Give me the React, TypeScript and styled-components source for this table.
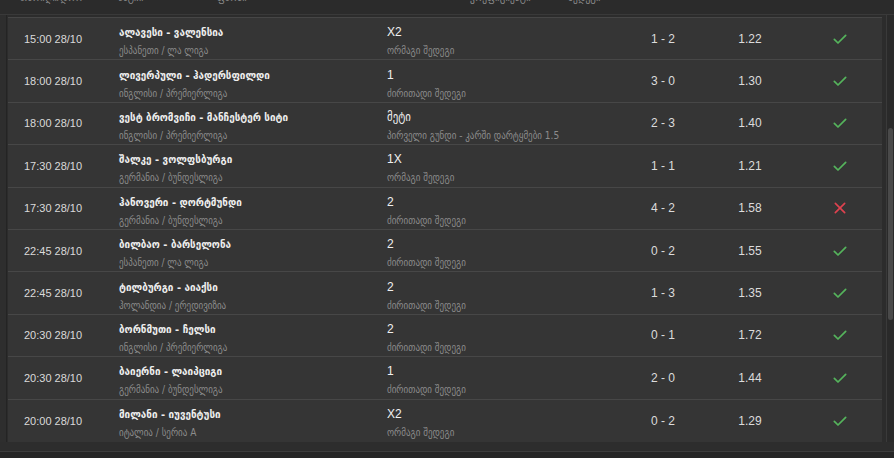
import React from "react";
import styled, { createGlobalStyle } from "styled-components";

const Global = createGlobalStyle`
  html, body { margin: 0; padding: 0; background: #2a2a2a; }
  body { font-family: "Liberation Sans", "DejaVu Sans Condensed", "DejaVu Sans", sans-serif; overflow: hidden; }
`;

type Bet = {
  time: string;
  match: string;
  league: string;
  pick: string;
  market: string;
  score: string;
  odds: string;
  win: boolean;
};

const rows: Bet[] = [
  { time: "15:00 28/10", match: "ალავესი - ვალენსია", league: "ესპანეთი / ლა ლიგა", pick: "X2", market: "ორმაგი შედეგი", score: "1 - 2", odds: "1.22", win: true },
  { time: "18:00 28/10", match: "ლივერპული - ჰადერსფილდი", league: "ინგლისი / პრემიერლიგა", pick: "1", market: "ძირითადი შედეგი", score: "3 - 0", odds: "1.30", win: true },
  { time: "18:00 28/10", match: "ვესტ ბრომვიჩი - მანჩესტერ სიტი", league: "ინგლისი / პრემიერლიგა", pick: "მეტი", market: "პირველი გუნდი - კარში დარტყმები 1.5", score: "2 - 3", odds: "1.40", win: true },
  { time: "17:30 28/10", match: "შალკე - ვოლფსბურგი", league: "გერმანია / ბუნდესლიგა", pick: "1X", market: "ორმაგი შედეგი", score: "1 - 1", odds: "1.21", win: true },
  { time: "17:30 28/10", match: "ჰანოვერი - დორტმუნდი", league: "გერმანია / ბუნდესლიგა", pick: "2", market: "ძირითადი შედეგი", score: "4 - 2", odds: "1.58", win: false },
  { time: "22:45 28/10", match: "ბილბაო - ბარსელონა", league: "ესპანეთი / ლა ლიგა", pick: "2", market: "ძირითადი შედეგი", score: "0 - 2", odds: "1.55", win: true },
  { time: "22:45 28/10", match: "ტილბურგი - აიაქსი", league: "ჰოლანდია / ერედივიზია", pick: "2", market: "ძირითადი შედეგი", score: "1 - 3", odds: "1.35", win: true },
  { time: "20:30 28/10", match: "ბორნმუთი - ჩელსი", league: "ინგლისი / პრემიერლიგა", pick: "2", market: "ძირითადი შედეგი", score: "0 - 1", odds: "1.72", win: true },
  { time: "20:30 28/10", match: "ბაიერნი - ლაიპციგი", league: "გერმანია / ბუნდესლიგა", pick: "1", market: "ძირითადი შედეგი", score: "2 - 0", odds: "1.44", win: true },
  { time: "20:00 28/10", match: "მილანი - იუვენტუსი", league: "იტალია / სერია A", pick: "X2", market: "ორმაგი შედეგი", score: "0 - 2", odds: "1.29", win: true },
];

const Page = styled.div`
  display: flex;
  flex-direction: column;
  width: 894px;
  height: 458px;
  background: #2a2a2a;
  overflow: hidden;
`;

const HeaderBar = styled.div`
  height: 14px;
  flex: none;
  display: flex;
  align-items: flex-end;
  overflow: hidden;
  background: #2b2b2b;
  border-bottom: 1px solid #393939;
`;

const HeaderCell = styled.div<{ $w: number }>`
  width: ${(p) => p.$w}px;
  flex: none;
  font-size: 10.5px;
  line-height: 14px;
  color: #8c8c8c;
  white-space: nowrap;
  margin-bottom: 10px;
`;

const Body = styled.div`
  flex: none;
  display: flex;
`;

const LeftRail = styled.div`
  width: 6px;
  flex: none;
  background: #2e2e2e;
  border-right: 1px solid #242424;
`;

const Panel = styled.div`
  flex: 1;
  display: flex;
  flex-direction: column;
  padding: 2px 0 0 1px;
  background: #2c2c2c;
`;

const Table = styled.div`
  display: flex;
  flex-direction: column;
  width: 874px;
  background: #353535;
  border-top: 1px solid #464646;
`;

const Row = styled.div`
  box-sizing: border-box;
  height: 42.4px;
  display: grid;
  grid-template-columns: 95px 268px 233px 86px 88px 88px;
  align-items: center;
  padding-left: 16px;
  border-bottom: 1px solid #474747;
  &:last-child { border-bottom: none; }
`;

const Time = styled.div`
  font-size: 11px;
  color: #dadada;
`;

const Stack = styled.div`
  display: flex;
  flex-direction: column;
  gap: 6px;
  padding-top: 6px;
`;

const Title = styled.div`
  font-family: "DejaVu Sans Condensed", "Liberation Sans", sans-serif;
  font-size: 11px;
  line-height: 13px;
  color: #eeeeee;
  font-weight: 700;
  white-space: nowrap;
`;

const Pick = styled.div`
  font-size: 12px;
  line-height: 13px;
  color: #f0f0f0;
  white-space: nowrap;
`;

const Sub = styled.div`
  font-family: "DejaVu Sans Condensed", "Liberation Sans", sans-serif;
  font-size: 10px;
  line-height: 12px;
  color: #8c8c8c;
  white-space: nowrap;
`;

const Center = styled.div`
  text-align: center;
  font-size: 12px;
  color: #dcdcdc;
`;

const IconCell = styled.div`
  display: flex;
  justify-content: center;
  padding-left: 4px;
`;

const Track = styled.div`
  width: 7px;
  flex: none;
  border-left: 1px solid #3a3a3a;
  background: #2a2a2a;
  padding-top: 113px;
`;

const Thumb = styled.div`
  margin-left: 1px;
  width: 5px;
  height: 192px;
  border-radius: 3px;
  background: #4a4a4a;
`;

const Foot = styled.div`
  flex: 1;
  display: flex;
  flex-direction: column;
`;

const FootGap = styled.div`
  height: 9px;
  background: #2d2d2d;
`;

const FootLine = styled.div`
  flex: 1;
  border-top: 1px solid #3d3d3d;
  background: #262626;
`;

const Check = () => (
  <svg width="16" height="16" viewBox="0 0 24 24" fill="none">
    <path d="M3.5 12.5l5.5 5.5L20.5 6.5" stroke="#55b45c" strokeWidth="2.6" strokeLinecap="round" strokeLinejoin="round" />
  </svg>
);

const Cross = () => (
  <svg width="14" height="14" viewBox="0 0 24 24" fill="none">
    <path d="M4 4L20 20M20 4L4 20" stroke="#e0424f" strokeWidth="2.8" strokeLinecap="round" />
  </svg>
);

export default function App() {
  return (
    <>
      <Global />
      <Page>
        <HeaderBar>
          <HeaderCell $w={20} />
          <HeaderCell $w={98}>თარიღი/დრო</HeaderCell>
          <HeaderCell $w={99}>მატჩი</HeaderCell>
          <HeaderCell $w={253}>ფსონი</HeaderCell>
          <HeaderCell $w={98}>კოეფიციენტი</HeaderCell>
          <HeaderCell $w={60}>შედეგი</HeaderCell>
        </HeaderBar>
        <Body>
          <LeftRail />
          <Panel>
            <Table>
              {rows.map((r, i) => (
                <Row key={i}>
                  <Time>{r.time}</Time>
                  <Stack>
                    <Title>{r.match}</Title>
                    <Sub>{r.league}</Sub>
                  </Stack>
                  <Stack>
                    <Pick>{r.pick}</Pick>
                    <Sub>{r.market}</Sub>
                  </Stack>
                  <Center>{r.score}</Center>
                  <Center>{r.odds}</Center>
                  <IconCell>{r.win ? <Check /> : <Cross />}</IconCell>
                </Row>
              ))}
            </Table>
          </Panel>
          <Track>
            <Thumb />
          </Track>
        </Body>
        <Foot>
          <FootGap />
          <FootLine />
        </Foot>
      </Page>
    </>
  );
}
